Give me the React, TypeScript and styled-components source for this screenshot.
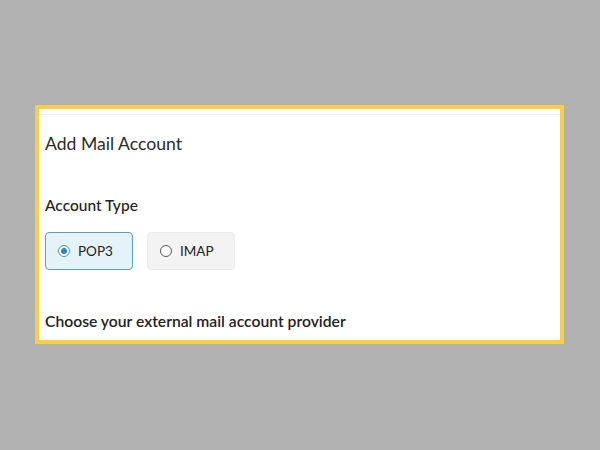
import React, { useState } from 'react';
import styled, { createGlobalStyle } from 'styled-components';

const GlobalStyle = createGlobalStyle`
  html, body {
    margin: 0;
    padding: 0;
    background: #b1b1b1;
  }
  body {
    font-family: Lato, "Open Sans", sans-serif;
  }
`;

const Page = styled.div`
  width: 600px;
  height: 450px;
  padding: 105px 0 0 35px;
  box-sizing: border-box;
`;

const Card = styled.div`
  width: 529px;
  height: 239px;
  box-sizing: border-box;
  border: 4px solid #f7cf48;
  background: #fff;
  padding-top: 5px;
`;

const Body = styled.div`
  border-top: 1px solid #f0f0f0;
  padding: 18px 0 0 6px;
`;

const Title = styled.h2`
  margin: 0;
  font-size: 17.6px;
  font-weight: 400;
  line-height: 22px;
  color: #2a2a2a;
`;

const SectionLabel = styled.h3`
  margin: 0;
  font-size: 15.5px;
  font-weight: 500;
  line-height: 20px;
  color: #222;
`;

const TypeLabel = styled(SectionLabel)`
  margin-top: 40px;
`;

const ProviderLabel = styled(SectionLabel)`
  margin-top: 41px;
  font-size: 15.7px;
  font-weight: 600;
`;

const Options = styled.div`
  display: flex;
  gap: 14px;
  margin-top: 17px;
`;

const Option = styled.label<{ $active: boolean }>`
  display: flex;
  align-items: center;
  gap: 8px;
  width: 88px;
  height: 38px;
  box-sizing: border-box;
  padding-left: 12px;
  border-radius: 4px;
  border: 1px solid ${(p) => (p.$active ? '#5d9dc2' : '#ebebeb')};
  background: ${(p) => (p.$active ? '#e4f2fa' : '#f3f3f3')};
  font-size: 13.5px;
  color: #222;
  cursor: pointer;
`;

const Radio = styled.span<{ $active: boolean }>`
  width: 12px;
  height: 12px;
  box-sizing: border-box;
  border-radius: 50%;
  border: 1px solid ${(p) => (p.$active ? '#4d8fb8' : '#555')};
  background: #fff;
  display: flex;
  align-items: center;
  justify-content: center;

  &::after {
    content: '';
    width: 6px;
    height: 6px;
    border-radius: 50%;
    background: ${(p) => (p.$active ? '#2f86bd' : 'transparent')};
  }
`;

const types = ['POP3', 'IMAP'];

export default function App() {
  const [type, setType] = useState('POP3');

  return (
    <Page>
      <GlobalStyle />
      <Card>
        <Body>
          <Title>Add Mail Account</Title>
          <TypeLabel>Account Type</TypeLabel>
          <Options>
            {types.map((t) => (
              <Option key={t} $active={type === t} onClick={() => setType(t)}>
                <Radio $active={type === t} />
                {t}
              </Option>
            ))}
          </Options>
          <ProviderLabel>Choose your external mail account provider</ProviderLabel>
        </Body>
      </Card>
    </Page>
  );
}
